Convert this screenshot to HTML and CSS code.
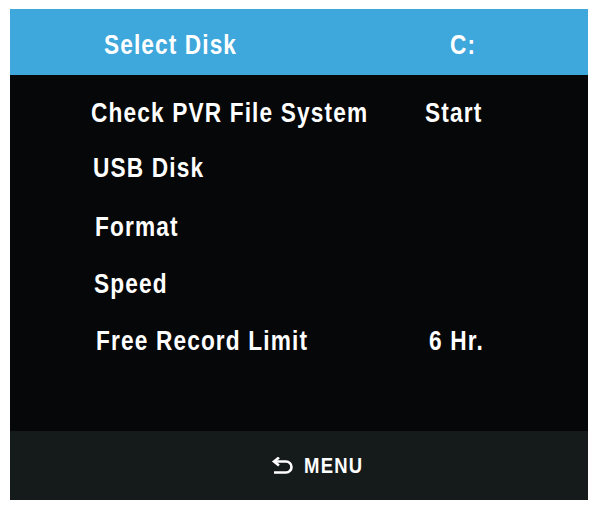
FILE: index.html
```html
<!DOCTYPE html>
<html>
<head>
<meta charset="utf-8">
<link rel="stylesheet" href="styles.css">
</head>
<body>
<div class="osd">
  <div class="header">
    <span class="cell title"><span class="txt">Select Disk</span></span>
    <span class="cell drive"><span class="txt">C:</span></span>
  </div>
  <div class="menu">
    <div class="row"><span class="label l1"><span class="txt">Check PVR File System</span></span><span class="value"><span class="txt">Start</span></span></div>
    <div class="row r2"><span class="label l2"><span class="txt">USB Disk</span></span><span class="value"></span></div>
    <div class="row"><span class="label l3"><span class="txt">Format</span></span><span class="value"></span></div>
    <div class="row"><span class="label l4"><span class="txt">Speed</span></span><span class="value"></span></div>
    <div class="row"><span class="label l5"><span class="txt">Free Record Limit</span></span><span class="value v5"><span class="txt">6 Hr.</span></span></div>
  </div>
  <div class="footer">
    <svg class="back" width="23" height="17" viewBox="0 0 23 17">
      <path d="M3 4.5 H15 A5.5 5.5 0 0 1 15 15.5 H3" fill="none" stroke="#fff" stroke-width="2.6"/>
      <path d="M8 0.5 L3 4.5 L8 8.5" fill="none" stroke="#fff" stroke-width="2.6" stroke-linejoin="miter"/>
    </svg>
    <span class="menu-label"><span class="txt">MENU</span></span>
  </div>
</div>
</body>
</html>
```
FILE: styles.css
```css
html, body {
  margin: 0;
  padding: 0;
  background: #ffffff;
}
body {
  font-family: "Liberation Sans", Arial, sans-serif;
  font-weight: bold;
  color: #ffffff;
}
.txt {
  display: inline-block;
  transform: scaleX(0.84);
  transform-origin: 0 50%;
  white-space: nowrap;
}
.osd {
  margin: 9px 0 0 10px;
  width: 578px;
  display: flex;
  flex-direction: column;
}
.header {
  height: 66px;
  background: #3ea7dc;
  display: flex;
  align-items: center;
  font-size: 27px;
  letter-spacing: 1.3px;
  padding-top: 6px;
  box-sizing: border-box;
}
.title {
  margin-left: 94px;
  width: 346px;
}
.menu {
  height: 346px;
  padding-top: 10px;
  background: #050708;
  font-size: 27px;
  letter-spacing: 1.35px;
}
.row {
  display: flex;
  height: 57px;
  line-height: 57px;
}
.r2 {
  line-height: 53px;
}
.label {
  width: 334px;
}
.l1 { margin-left: 81px; }
.l2 { margin-left: 83px; }
.l3 { margin-left: 85px; }
.l4 { margin-left: 84px; }
.l5 { margin-left: 86px; }
.v5 { margin-left: -1px; }
.footer {
  height: 69px;
  background: #151b1b;
  display: flex;
  align-items: center;
  justify-content: flex-start;
  padding-left: 261px;
  box-sizing: border-box;
  gap: 10px;
}
.back {
  display: block;
}
.menu-label {
  font-size: 22px;
  letter-spacing: 1.5px;
  line-height: 24px;
}
```
